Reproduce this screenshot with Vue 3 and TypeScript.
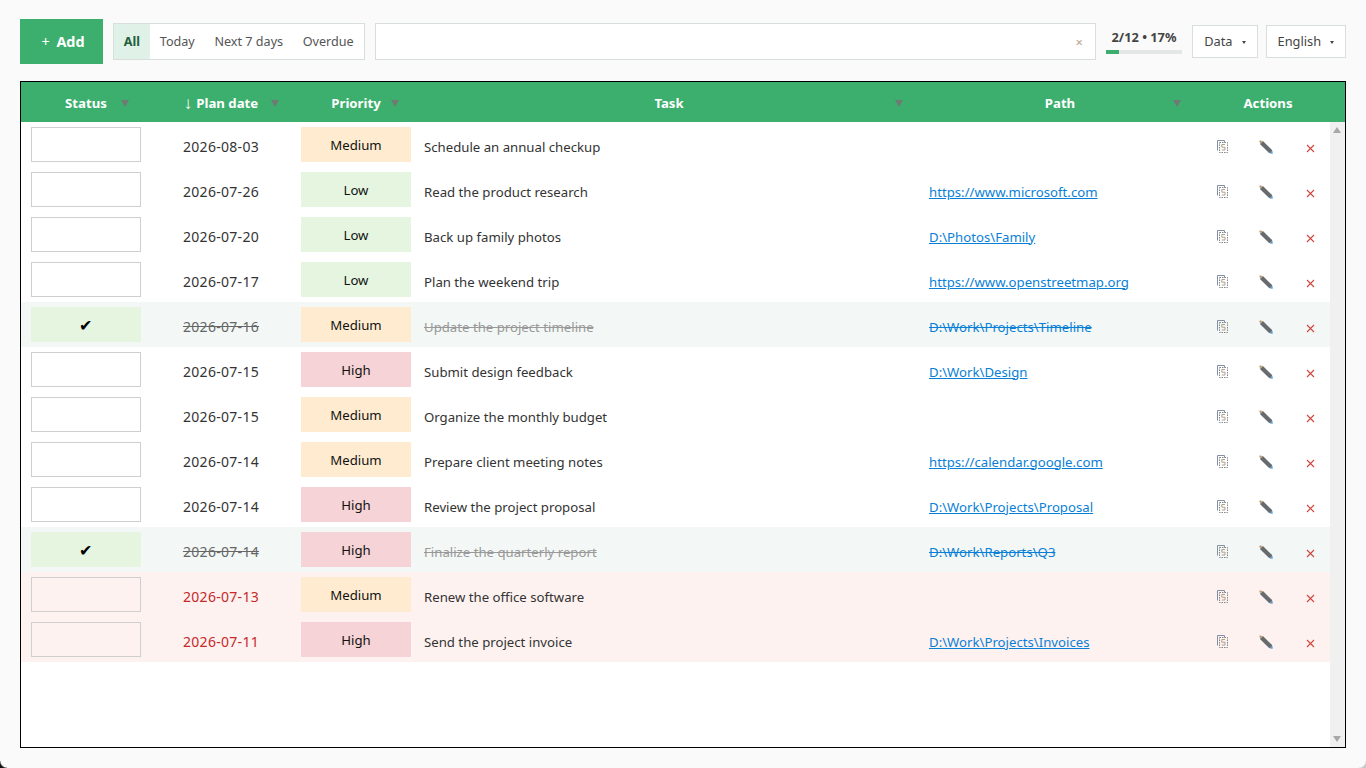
<script setup lang="ts">
import { ref } from 'vue'

type Priority = 'Low' | 'Medium' | 'High'

interface Task {
  date: string
  priority: Priority
  title: string
  path?: string
  done?: boolean
  overdue?: boolean
}

const filters = ['All', 'Today', 'Next 7 days', 'Overdue']
const activeFilter = ref('All')
const search = ref('')

const tasks = ref<Task[]>([
  { date: '2026-08-03', priority: 'Medium', title: 'Schedule an annual checkup' },
  { date: '2026-07-26', priority: 'Low', title: 'Read the product research', path: 'https://www.microsoft.com' },
  { date: '2026-07-20', priority: 'Low', title: 'Back up family photos', path: 'D:\\Photos\\Family' },
  { date: '2026-07-17', priority: 'Low', title: 'Plan the weekend trip', path: 'https://www.openstreetmap.org' },
  { date: '2026-07-16', priority: 'Medium', title: 'Update the project timeline', path: 'D:\\Work\\Projects\\Timeline', done: true },
  { date: '2026-07-15', priority: 'High', title: 'Submit design feedback', path: 'D:\\Work\\Design' },
  { date: '2026-07-15', priority: 'Medium', title: 'Organize the monthly budget' },
  { date: '2026-07-14', priority: 'Medium', title: 'Prepare client meeting notes', path: 'https://calendar.google.com' },
  { date: '2026-07-14', priority: 'High', title: 'Review the project proposal', path: 'D:\\Work\\Projects\\Proposal' },
  { date: '2026-07-14', priority: 'High', title: 'Finalize the quarterly report', path: 'D:\\Work\\Reports\\Q3', done: true },
  { date: '2026-07-13', priority: 'Medium', title: 'Renew the office software', overdue: true },
  { date: '2026-07-11', priority: 'High', title: 'Send the project invoice', path: 'D:\\Work\\Projects\\Invoices', overdue: true },
])
</script>

<template>
  <div class="page">
    <div class="toolbar">
      <button class="add-btn"><span class="plus">+</span> Add</button>
      <div class="filters">
        <button
          v-for="f in filters"
          :key="f"
          :class="['filter', { active: f === activeFilter }]"
          @click="activeFilter = f"
        >{{ f }}</button>
      </div>
      <div class="search">
        <input v-model="search" type="text" />
        <span class="clear">×</span>
      </div>
      <div class="progress">
        <div class="progress-text">2/12 • 17%</div>
        <div class="progress-track"><div class="progress-fill" :style="{ width: '17%' }"></div></div>
      </div>
      <button class="menu-btn data">Data <span class="caret"></span></button>
      <button class="menu-btn lang">English <span class="caret"></span></button>
    </div>

    <div class="table">
      <div class="head">
        <div class="hcell">Status<i class="sort s26"></i></div>
        <div class="hcell"><span class="arrow">↓</span> Plan date<i class="sort s16"></i></div>
        <div class="hcell">Priority<i class="sort s26"></i></div>
        <div class="hcell">Task<i class="sort s18"></i></div>
        <div class="hcell">Path<i class="sort s26"></i></div>
        <div class="hcell">Actions</div>
      </div>
      <div class="body">
        <div class="rows">
          <div
            v-for="(t, i) in tasks"
            :key="i"
            :class="['row', { done: t.done, overdue: t.overdue }]"
          >
            <div class="cell center">
              <div class="status">{{ t.done ? '✔' : '' }}</div>
            </div>
            <div class="cell center date">{{ t.date }}</div>
            <div class="cell center">
              <div :class="['priority', t.priority.toLowerCase()]">{{ t.priority }}</div>
            </div>
            <div class="cell title">{{ t.title }}</div>
            <div class="cell path"><a v-if="t.path" href="#" @click.prevent>{{ t.path }}</a></div>
            <div class="cell actions">
              <button class="icon copy" title="Copy">
                <svg width="12" height="13" viewBox="0 0 12 13">
                  <path d="M.5 10.5V.5h7v2" fill="none" stroke="#858fa3" />
                  <path d="M2.5 2.5h8v10h-8z" fill="none" stroke="#7f858c" stroke-dasharray="1.5 1" />
                  <path d="M8 4.5H4.8v2.7H8v2.8H4.8" fill="none" stroke="#b0a08a" />
                </svg>
              </button>
              <button class="icon edit" title="Edit">
                <svg width="14" height="14" viewBox="0 0 14 14">
                  <path d="M3.9.9 13.1 10.1 12.6 12.6 10.1 13.1 .9 3.9z" fill="#666b70" />
                  <path d="M.2 1.2 1.2.2 3.6 1.2 1.2 3.6z" fill="#c79f6e" />
                  <path d="M10.6 13.4 13.4 10.6 13.8 13.8z" fill="#5b9bd5" />
                </svg>
              </button>
              <button class="icon del" title="Delete">
                <svg width="9" height="9" viewBox="0 0 9 9">
                  <path d="M1 1l7 7M8 1 1 8" stroke="#d0453d" stroke-width="1.1" fill="none" />
                </svg>
              </button>
            </div>
          </div>
        </div>
        <div class="scrollbar">
          <span class="tri up"></span>
          <span class="tri down"></span>
        </div>
      </div>
    </div>
    <span class="corner left"></span>
    <span class="corner right"></span>
  </div>
</template>

<style>
html,
body {
  margin: 0;
  height: 100%;
  background: #fafafa;
  overflow: hidden;
}
</style>

<style scoped>
.page {
  height: 768px;
  box-sizing: border-box;
  padding: 19px 20px 20px;
  display: flex;
  flex-direction: column;
  gap: 17px;
  font-family: "Noto Sans", "Open Sans", sans-serif;
  font-size: 13.2px;
  color: #333;
  background: #fafafa;
  overflow: hidden;
  position: relative;
}

button {
  font-family: inherit;
  background: none;
  border: none;
  padding: 0;
  cursor: pointer;
}

.toolbar {
  display: flex;
  align-items: center;
  height: 45px;
  flex: none;
}

.add-btn {
  width: 83px;
  height: 45px;
  padding-left: 3px;
  background: #3caf6e;
  color: #fff;
  font-size: 14.4px;
  font-weight: 700;
}

.plus {
  font-weight: 400;
  margin-right: 3px;
}

.filters {
  display: flex;
  height: 37px;
  box-sizing: border-box;
  margin-left: 10px;
  border: 1px solid #d8dedc;
  background: #fff;
}

.filter {
  font-size: 12.6px;
  color: #555;
  padding: 0 9.85px 1px;
  height: 35px;
}

.filter.active {
  background: #e0f2e8;
  color: #1f5f3c;
  font-weight: 700;
}

.search {
  flex: 1;
  height: 37px;
  box-sizing: border-box;
  margin-left: 10px;
  border: 1px solid #d8dedc;
  background: #fff;
  display: flex;
  align-items: center;
  padding-right: 12px;
}

.search input {
  flex: 1;
  border: none;
  outline: none;
  background: none;
  height: 100%;
  padding: 0 10px;
}

.clear {
  color: #b9a48f;
  font-size: 13px;
}

.progress {
  width: 76px;
  margin-left: 10px;
  margin-top: -1px;
}

.progress-text {
  font-size: 12.8px;
  font-weight: 700;
  color: #444;
  text-align: center;
  line-height: 16px;
}

.progress-track {
  height: 4px;
  margin-top: 5px;
  background: #e3e8e6;
}

.progress-fill {
  height: 100%;
  background: #3caf6e;
}

.menu-btn {
  height: 33px;
  box-sizing: border-box;
  border: 1px solid #d8dedc;
  background: #fff;
  font-size: 12.8px;
  color: #444;
  padding-bottom: 2px;
}

.menu-btn.data {
  width: 66px;
  margin-left: 10px;
}

.menu-btn.lang {
  width: 80px;
  margin-left: 8px;
}

.caret {
  display: inline-block;
  margin-left: 6px;
  vertical-align: middle;
  border-left: 2px solid transparent;
  border-right: 2px solid transparent;
  border-top: 3px solid #444;
}

.table {
  flex: 1;
  min-height: 0;
  display: flex;
  flex-direction: column;
  border: 1px solid #000;
  background: #fff;
}

.head {
  flex: none;
  height: 40px;
  display: grid;
  grid-template-columns: 130px 140px 130px 496px 286px 1fr;
  background: #3caf6e;
  color: #fff;
  font-weight: 700;
  font-size: 13.2px;
}

.hcell {
  position: relative;
  display: flex;
  align-items: center;
  justify-content: center;
  padding-top: 1px;
}

.hcell:last-child {
  padding-right: 12px;
}

.arrow {
  margin-right: 4px;
  font-size: 17px;
  line-height: 1;
  font-weight: 400;
}

.sort {
  position: absolute;
  top: 18px;
  border-left: 4px solid transparent;
  border-right: 4px solid transparent;
  border-top: 7px solid #6f7a74;
}

.s26 {
  right: 22px;
}

.s16 {
  right: 12px;
}

.s18 {
  right: 14px;
}

.body {
  flex: 1;
  min-height: 0;
  display: flex;
}

.rows {
  flex: 1;
  min-width: 0;
}

.row {
  height: 45px;
  display: grid;
  grid-template-columns: 130px 140px 130px 496px 285px 1fr;
}

.row.done {
  background: #f3f8f6;
}

.row.overdue {
  background: #fef2f0;
}

.cell {
  display: flex;
  align-items: center;
  min-width: 0;
}

.center {
  justify-content: center;
}

.status {
  width: 110px;
  height: 35px;
  box-sizing: border-box;
  border: 1px solid #cfcfcf;
  display: flex;
  align-items: center;
  justify-content: center;
  padding-right: 1px;
  color: #000;
  font-size: 16px;
}

.done .status {
  background: #e5f5e0;
  border-color: #e5f5e0;
}

.date {
  padding-top: 4px;
  font-size: 14px;
  letter-spacing: 0.3px;
  color: #333;
}

.overdue .date {
  color: #c62828;
}

.done .date {
  color: #666;
  text-decoration: line-through;
}

.priority {
  width: 110px;
  height: 35px;
  display: flex;
  align-items: center;
  justify-content: center;
  color: #111;
}

.priority.low {
  background: #e5f5e0;
}

.priority.medium {
  background: #ffecd0;
}

.priority.high {
  background: #f6d3d6;
}

.title {
  padding: 4px 0 0 3px;
  color: #333;
}

.done .title {
  color: #999;
  text-decoration: line-through;
}

.path {
  padding: 4px 0 0 12px;
}

.path a {
  color: #0a7fd6;
}

.done .path a {
  text-decoration: line-through;
}

.actions {
  justify-content: center;
}

.icon {
  flex: none;
  width: 44px;
  height: 44px;
  display: flex;
  align-items: center;
  justify-content: center;
}

.copy {
  padding: 3px 0 0 1px;
}

.edit {
  padding-top: 5px;
}

.del {
  padding: 7px 0 0 1px;
}

.scrollbar {
  flex: none;
  width: 15px;
  background: #f0f0f0;
  position: relative;
}

.tri {
  position: absolute;
  left: 3px;
  border-left: 4px solid transparent;
  border-right: 4px solid transparent;
}

.tri.up {
  top: 5px;
  border-bottom: 6px solid #a8a8a8;
}

.tri.down {
  bottom: 5px;
  border-top: 6px solid #a8a8a8;
}

.corner {
  position: absolute;
  bottom: 0;
  width: 7px;
  height: 7px;
}

.corner.left {
  left: 0;
  background: radial-gradient(circle at top right, transparent 6px, #111 7.5px);
}

.corner.right {
  right: 0;
  background: radial-gradient(circle at top left, transparent 6px, #c8c8c8 7.5px);
}
</style>
